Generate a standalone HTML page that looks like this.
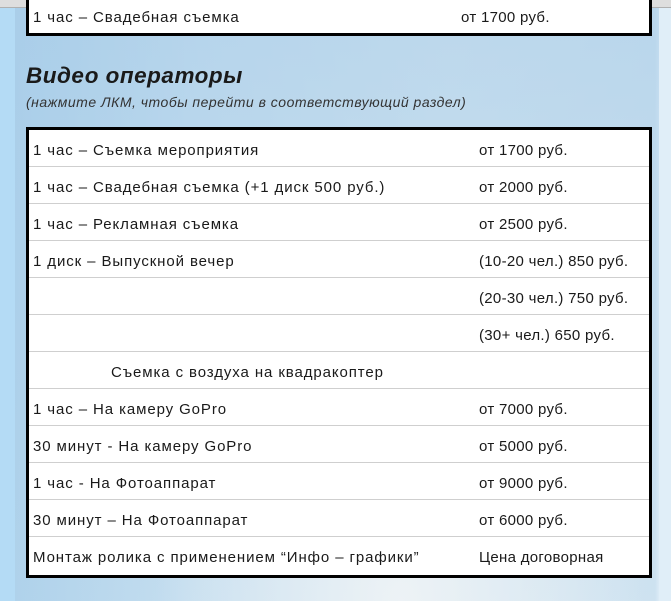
<!DOCTYPE html>
<html><head><meta charset="utf-8"><style>
html,body{margin:0;padding:0;}
body{width:671px;height:601px;overflow:hidden;position:relative;font-family:"Liberation Sans",sans-serif;color:#1a1a1a;
background:linear-gradient(90deg,#b4dbf5 0,#b4dbf5 15px,#a9cfea 15px,#c6dff0 200px,#d6e7f2 450px,#cfe3f1 655px,#e0eef8 659px,#e0eef8 100%);}
.bg2{position:absolute;left:15px;top:0;width:644px;height:601px;background:radial-gradient(ellipse at 60% 100%,rgba(240,244,246,0.9) 0,rgba(240,244,246,0) 45%),linear-gradient(180deg,rgba(170,205,232,0.6),rgba(200,222,238,0.2));}
.top{position:absolute;left:0;top:0;width:671px;height:7px;background:#dedede;border-bottom:1px solid #b0b0b0;}
.t1{position:absolute;left:26px;top:0;width:620px;height:33px;background:#fff;border:3px solid #000;border-top:none;}
.t1 span{position:absolute;top:9px;font-size:15px;}
h2{position:absolute;left:26px;top:63px;margin:0;font-size:22.5px;font-weight:bold;font-style:italic;letter-spacing:0.5px;}
.sub{position:absolute;left:26px;top:94px;font-size:14px;font-style:italic;color:#333;letter-spacing:0.5px;}
.t2{position:absolute;left:26px;top:127px;width:620px;height:445px;background:#fff;border:3px solid #000;}
.row{height:36px;border-bottom:1px solid #cfcfcf;position:relative;font-size:15px;}
.row:last-child{border-bottom:none;}
.row span{position:absolute;top:12px;white-space:nowrap;letter-spacing:0.9px;}
.a{left:4px;}.row .b{left:450px;letter-spacing:0.3px;}
</style></head><body>
<div class="bg2"></div>
<div class="top"></div>
<div class="t1"><span style="left:4px;letter-spacing:0.9px">1 час – Свадебная съемка</span><span style="left:432px;letter-spacing:0.3px">от 1700 руб.</span></div>
<h2>Видео операторы</h2>
<div class="sub">(нажмите ЛКМ, чтобы перейти в соответствующий раздел)</div>
<div class="t2">
<div class="row"><span class="a">1 час – Съемка мероприятия</span><span class="b">от 1700 руб.</span></div>
<div class="row"><span class="a">1 час – Свадебная съемка (+1 диск 500 руб.)</span><span class="b">от 2000 руб.</span></div>
<div class="row"><span class="a">1 час – Рекламная съемка</span><span class="b">от 2500 руб.</span></div>
<div class="row"><span class="a">1 диск – Выпускной вечер</span><span class="b">(10-20 чел.) 850 руб.</span></div>
<div class="row"><span class="b">(20-30 чел.) 750 руб.</span></div>
<div class="row"><span class="b">(30+ чел.) 650 руб.</span></div>
<div class="row"><span style="left:82px">Съемка с воздуха на квадракоптер</span></div>
<div class="row"><span class="a">1 час – На камеру GoPro</span><span class="b">от 7000 руб.</span></div>
<div class="row"><span class="a">30 минут - На камеру GoPro</span><span class="b">от 5000 руб.</span></div>
<div class="row"><span class="a">1 час - На Фотоаппарат</span><span class="b">от 9000 руб.</span></div>
<div class="row"><span class="a">30 минут – На Фотоаппарат</span><span class="b">от 6000 руб.</span></div>
<div class="row"><span class="a">Монтаж ролика с применением “Инфо – графики”</span><span class="b">Цена договорная</span></div>
</div>
</body></html>
